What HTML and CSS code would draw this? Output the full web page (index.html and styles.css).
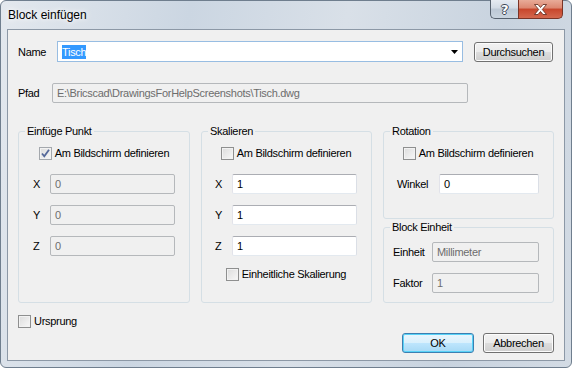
FILE: index.html
```html
<!DOCTYPE html>
<html lang="de">
<head>
    <meta charset="UTF-8">
    <title>Block einfügen</title>
    <link rel="stylesheet" href="styles.css">
</head>
<body>
    <div class="window">
        <div class="titlebar">
            <span class="title">Block einfügen</span>
            <div class="caption-buttons">
                <span class="cap-btn help">?</span>
                <span class="cap-btn close">
                    <svg width="13" height="11" viewBox="0 0 13 11">
                        <path d="M0.5 0.5h3.5l2.5 3 2.5-3h3.5l-4.2 5 4.2 5h-3.5l-2.5-3-2.5 3h-3.5l4.2-5z" fill="#fff" stroke="#5a2418" stroke-width="0.8" stroke-linejoin="round"/>
                    </svg>
                </span>
            </div>
        </div>

        <div class="client">
            <!-- Name -->
            <div class="row name-row">
                <span class="lbl name-lbl">Name</span>
                <div class="combo">
                    <span class="selected">Tisch</span>
                    <svg class="arrow" width="7" height="4" viewBox="0 0 7 4"><path d="M0 0h7L3.5 4z" fill="#000"/></svg>
                </div>
                <button class="btn browse">Durchsuchen</button>
            </div>

            <!-- Pfad -->
            <div class="row path-row">
                <span class="lbl path-lbl">Pfad</span>
                <div class="field disabled path-field">E:\Bricscad\DrawingsForHelpScreenshots\Tisch.dwg</div>
            </div>

            <div class="groups">
                <div class="group insert">
                    <span class="group-title">Einfüge Punkt</span>
                    <div class="check-row first">
                        <span class="box checked disabled-check">
                            <svg width="11" height="11" viewBox="0 0 11 11"><path d="M2 5.5l2.3 2.8L9 1.8" fill="none" stroke="#55699a" stroke-width="1.8"/></svg>
                        </span>
                        <span class="check-lbl">Am Bildschirm definieren</span>
                    </div>
                    <div class="coord first">
                        <span class="lbl coord-lbl">X</span>
                        <div class="field disabled">0</div>
                    </div>
                    <div class="coord">
                        <span class="lbl coord-lbl">Y</span>
                        <div class="field disabled">0</div>
                    </div>
                    <div class="coord">
                        <span class="lbl coord-lbl">Z</span>
                        <div class="field disabled">0</div>
                    </div>
                </div>

                <div class="group scale">
                    <span class="group-title">Skalieren</span>
                    <div class="check-row first">
                        <span class="box"></span>
                        <span class="check-lbl">Am Bildschirm definieren</span>
                    </div>
                    <div class="coord first">
                        <span class="lbl coord-lbl">X</span>
                        <div class="field">1</div>
                    </div>
                    <div class="coord">
                        <span class="lbl coord-lbl">Y</span>
                        <div class="field">1</div>
                    </div>
                    <div class="coord">
                        <span class="lbl coord-lbl">Z</span>
                        <div class="field">1</div>
                    </div>
                    <div class="check-row uniform">
                        <span class="box"></span>
                        <span class="check-lbl">Einheitliche Skalierung</span>
                    </div>
                </div>

                <div class="group-col">
                    <div class="group rotation">
                        <span class="group-title">Rotation</span>
                        <div class="check-row first">
                            <span class="box"></span>
                            <span class="check-lbl">Am Bildschirm definieren</span>
                        </div>
                        <div class="coord first">
                            <span class="lbl angle-lbl">Winkel</span>
                            <div class="field">0</div>
                        </div>
                    </div>
                    <div class="group unit">
                        <span class="group-title">Block Einheit</span>
                        <div class="coord unit-first">
                            <span class="lbl unit-lbl">Einheit</span>
                            <div class="field disabled">Millimeter</div>
                        </div>
                        <div class="coord">
                            <span class="lbl unit-lbl">Faktor</span>
                            <div class="field disabled">1</div>
                        </div>
                    </div>
                </div>
            </div>

            <div class="check-row origin">
                <span class="box"></span>
                <span class="check-lbl">Ursprung</span>
            </div>

            <div class="actions">
                <button class="btn default ok">OK</button>
                <button class="btn cancel">Abbrechen</button>
            </div>
        </div>
    </div>
</body>
</html>
```

FILE: styles.css
```css
body {
    margin: 0;
    background-color: #ffffff;
    font-family: "Liberation Sans", Arial, sans-serif;
    font-size: 11px;
    letter-spacing: -0.3px;
    color: #000;
}

/* Fensterrahmen */
.window {
    width: 572px;
    height: 368px;
    box-sizing: border-box;
    border: 1px solid #6f7e8e;
    border-radius: 6px;
    padding: 0 6px 6px 6px;
    display: flex;
    flex-direction: column;
    background: linear-gradient(100deg, #e3e8ee 0%, #cbd6e2 30%, #d9e0e8 55%, #c8d3df 80%, #d3dbe4 100%);
}

.titlebar {
    height: 28px;
    display: flex;
    align-items: flex-start;
}

.title {
    margin-left: 1px;
    padding-top: 6px;
    line-height: 16px;
    font-size: 12px;
    letter-spacing: 0;
    text-shadow: 0 0 8px #fff, 0 0 5px #fff;
}

.caption-buttons {
    display: flex;
    margin-left: auto;
    margin-right: 2px;
    margin-top: -1px;
}

.cap-btn {
    height: 19px;
    box-sizing: border-box;
    border: 1px solid #56616e;
    border-top: none;
    display: flex;
    align-items: center;
    justify-content: center;
}

.help {
    width: 28px;
    border-right: none;
    border-radius: 0 0 0 5px;
    background: linear-gradient(#e6ebf1, #d2dbe5 45%, #bcc8d5 50%, #c9d4df);
    font-family: "DejaVu Sans", sans-serif;
    font-size: 13px;
    font-weight: bold;
    color: #fff;
    text-shadow: 1px 0 0 #3b4653, -1px 0 0 #3b4653, 0 1px 0 #3b4653, 0 -1px 0 #3b4653;
}

.close {
    width: 45px;
    border-radius: 0 0 5px 0;
    border-color: #7a3426;
    background: linear-gradient(#e8ab98, #dc8670 45%, #c7452b 50%, #d4684e);
}

/* Inhalt */
.client {
    flex: 1;
    border: 1px solid #8c98a6;
    background-color: #f0f0f0;
    padding: 11px 10px 7px 10px;
    display: flex;
    flex-direction: column;
}

.row {
    display: flex;
    align-items: center;
}

.name-row {
    height: 21px;
}

.path-row {
    height: 20px;
    margin-top: 21px;
}

.name-lbl {
    width: 39px;
}

.path-lbl {
    width: 34px;
}

.combo {
    width: 406px;
    height: 21px;
    box-sizing: border-box;
    border: 1px solid #98bde2;
    background-color: #fff;
    padding-left: 4px;
    display: flex;
    align-items: center;
}

.selected {
    background-color: #3399ff;
    color: #fff;
    line-height: 14px;
}

.arrow {
    margin-left: auto;
    margin-right: 4px;
}

.field {
    flex: 1;
    height: 20px;
    box-sizing: border-box;
    border: 1px solid;
    border-color: #abadb3 #dbdfe6 #e3e9ef #e2e3ea;
    border-radius: 2px;
    background-color: #fff;
    padding: 0 4px;
    line-height: 18px;
    white-space: nowrap;
}

.field.disabled {
    background-color: #f0f0f0;
    border-color: #b5b8bb;
    color: #6d6d6d;
}

.path-field {
    flex: none;
    width: 416px;
}

/* Buttons */
.btn {
    height: 20px;
    box-sizing: border-box;
    border: 1px solid #707070;
    border-radius: 3px;
    background: linear-gradient(#f2f2f2, #ebebeb 50%, #dddddd 50%, #cfcfcf);
    box-shadow: inset 0 0 0 1px #fcfcfc;
    font-family: inherit;
    font-size: 11px;
    letter-spacing: -0.3px;
    color: #000;
    padding: 0;
}

.browse {
    width: 79px;
    margin-left: 11px;
}

.default {
    border-color: #3c7fb1;
    background: linear-gradient(#eaf6fd, #d9f0fc 50%, #bee6fd 50%, #a7d9f5);
    box-shadow: inset 0 0 0 1px #58d2f7;
}

.ok {
    width: 72px;
}

.cancel {
    width: 71px;
}

/* Gruppen */
.groups {
    display: flex;
    gap: 11px;
    height: 172px;
    margin-top: 28px;
}

.group {
    box-sizing: border-box;
    border: 1px solid #d5dfe5;
    border-radius: 3px;
    display: flex;
    flex-direction: column;
    padding: 0 14px;
}

.insert {
    width: 172px;
}

.scale {
    width: 171px;
    padding-left: 13px;
}

.group-col {
    width: 171px;
    display: flex;
    flex-direction: column;
    gap: 8px;
}

.rotation {
    height: 88px;
    padding-left: 13px;
}

.unit {
    flex: 1;
    padding-left: 9px;
}

.group-title {
    align-self: flex-start;
    margin: -7px 0 0 -8px;
    padding: 0 2px;
    background-color: #f0f0f0;
    line-height: 13px;
}

.scale .group-title,
.rotation .group-title {
    margin-left: -7px;
}

.unit .group-title {
    margin-left: -3px;
}

.check-row {
    display: flex;
    align-items: center;
    justify-content: center;
    line-height: 13px;
}

.check-row.first {
    margin-top: 9px;
}

.check-row.uniform {
    margin-top: 12px;
}

.box {
    width: 13px;
    height: 13px;
    box-sizing: border-box;
    border: 1px solid #8e8f8f;
    background: linear-gradient(135deg, #dcdcdc, #f8f8f8);
    box-shadow: inset 0 0 0 1px #f2f2f2;
    display: flex;
    align-items: center;
    justify-content: center;
}

.disabled-check {
    border-color: #a4a8ad;
}

.check-lbl {
    margin-left: 3px;
}

.origin {
    justify-content: flex-start;
    margin-top: 12px;
}

.coord {
    display: flex;
    align-items: center;
    margin-top: 11px;
}

.coord.first {
    margin-top: 14px;
}

.coord.unit-first {
    margin-top: 8px;
}

.coord-lbl {
    width: 17px;
}

.angle-lbl {
    width: 42px;
}

.unit-lbl {
    width: 39px;
}

.actions {
    display: flex;
    justify-content: flex-end;
    gap: 9px;
    margin-top: 5px;
}
```
